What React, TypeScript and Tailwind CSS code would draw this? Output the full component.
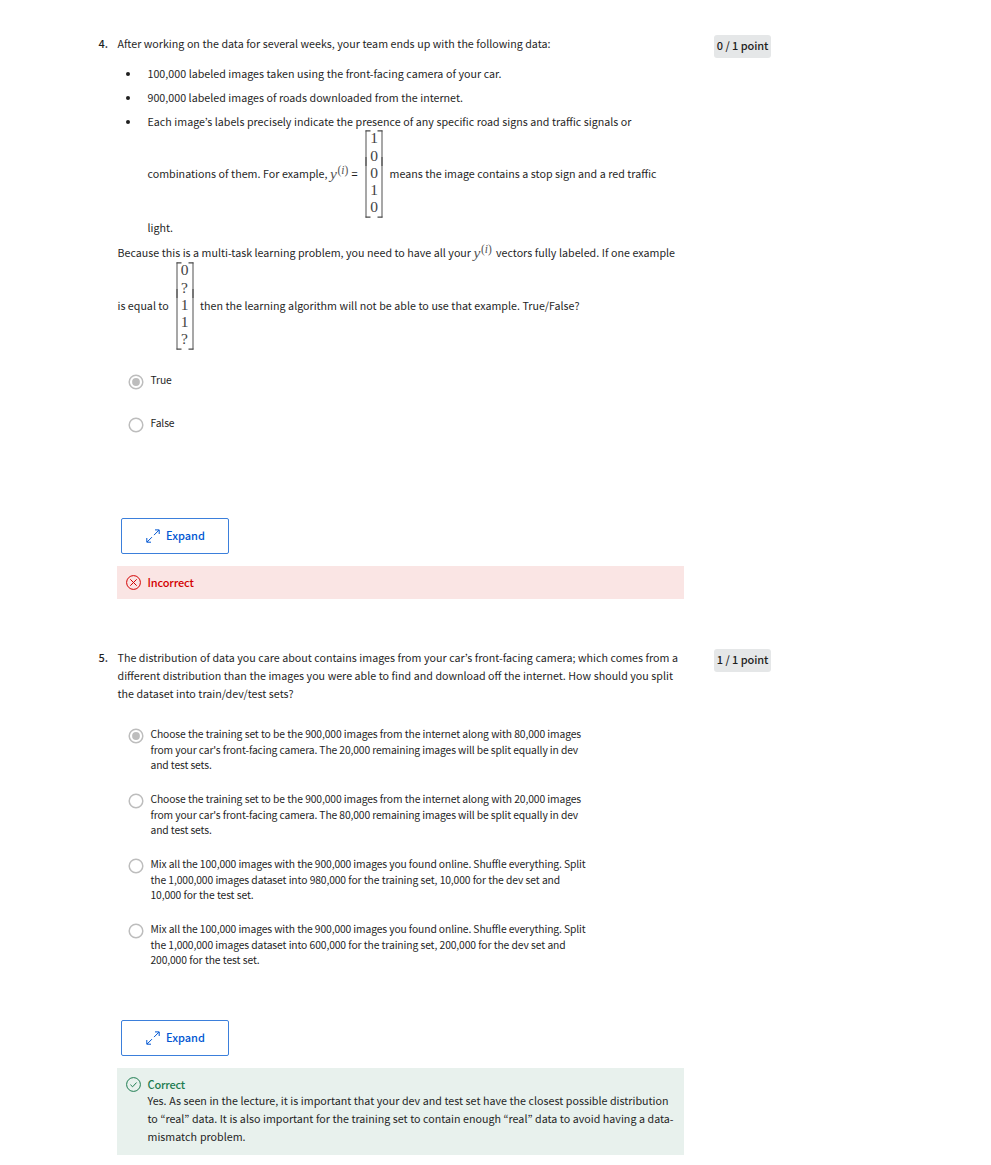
import type { ReactNode } from "react";

const base = "whitespace-nowrap [text-align-last:justify]";

function Line({ w, children }: { w: string; children: ReactNode }) {
  return <div className={`${base} ${w} h-[18px] shrink-0 text-[10.7px] leading-[18px]`}>{children}</div>;
}

function Bracket({ flip }: { flip?: boolean }) {
  return (
    <svg viewBox="0 0 6 88" className={flip ? "h-[88px] w-[6px] shrink-0 -scale-x-100" : "h-[88px] w-[6px] shrink-0"} fill="none">
      <path d="M1 .5V87.5" stroke="#8a8a8a" strokeWidth="1.5" />
      <path d="M.5 .8H5.5M.5 87.2H5.5" stroke="#4a4a4a" strokeWidth="1.2" />
      <path d="M1 27V36" stroke="#666" strokeWidth="1.5" />
    </svg>
  );
}

function Matrix({ rows }: { rows: string[] }) {
  return (
    <div className="-my-[36px] flex h-[90px] w-[18px] shrink-0 items-center">
      <Bracket />
      <div className="-mt-[3px] flex w-[6px] flex-col items-center font-['Liberation_Serif',serif] text-[15.5px] leading-[17.3px] text-[#444]">
        {rows.map((r, i) => (
          <span key={i}>{r}</span>
        ))}
      </div>
      <Bracket flip />
    </div>
  );
}

function Yi() {
  return (
    <span className="block h-[18px] w-[19px] shrink-0 whitespace-nowrap font-['Liberation_Serif',serif] text-[15.5px] leading-[18px] text-[#555]">
      <i>y</i>
      <span className="relative -top-[5px] ml-[0.5px] text-[11.5px] leading-none">
        (<i>i</i>)
      </span>
    </span>
  );
}

function Badge({ children }: { children: ReactNode }) {
  return (
    <div className="ml-[30px] mt-px flex h-[23px] w-[57px] shrink-0 items-center justify-center rounded-[3px] bg-[#e5e7e8] pb-[2px] text-[11px] font-medium tracking-[-0.1px] text-[#1f1f1f]">
      <div className={`${base} w-[51.5px]`}>{children}</div>
    </div>
  );
}

function Question({ n, score, children }: { n: string; score: string; children: ReactNode }) {
  return (
    <section className="flex items-start pl-[98px]">
      <div className="w-[19px] shrink-0 pl-[0.5px] text-[11px] font-medium leading-[18px]">{n}.</div>
      <div className="w-[567px] shrink-0 pt-px">{children}</div>
      <Badge>{score}</Badge>
    </section>
  );
}

function Bullet({ children }: { children: ReactNode }) {
  return (
    <li className="flex h-[24px] items-start pl-[9px]">
      <span className="mt-[7px] mr-[17.5px] size-[4px] rounded-full bg-[#1f1f1f]" />
      {children}
    </li>
  );
}

function Radio({ on }: { on?: boolean }) {
  return (
    <svg viewBox="0 0 16 16" className="mt-[2px] size-[16px] shrink-0" fill="none">
      <circle cx="8" cy="8" r="6.8" stroke="#bdbdbd" strokeWidth="1.5" />
      {on && <circle cx="8" cy="8" r="3.9" fill="#bdbdbd" />}
    </svg>
  );
}

function Option({ on, lines, className }: { on?: boolean; lines: [string, string][]; className: string }) {
  return (
    <label className={`flex items-start pl-[11px] ${className}`}>
      <Radio on={on} />
      <span className="ml-[6.5px] block text-[10.3px] leading-[15.7px]">
        {lines.map(([t, w]) => (
          <span key={t} className={`${base} ${w} block tracking-[-0.12px]`}>
            {t}
          </span>
        ))}
      </span>
    </label>
  );
}

function Expand() {
  return (
    <button className="ml-[4px] flex h-[36px] w-[108px] items-center rounded-[2px] border border-[#3b7fdb] pl-[24px] text-[11px] font-medium text-[#0056d2]">
      <svg viewBox="0 0 14 14" className="size-[14px]" fill="none" stroke="#0056d2" strokeWidth="1">
        <path d="M9 .9H13.2V5M13 1.1L8 6.1M6 8.1L1 13.1M.8 9V13.2H5" />
      </svg>
      <span className="ml-[6px] whitespace-nowrap pb-px">Expand</span>
    </button>
  );
}

function StatusIcon({ ok }: { ok?: boolean }) {
  return (
    <svg viewBox="0 0 15 15" className="size-[15px] shrink-0" fill="none" stroke="currentColor" strokeWidth="1">
      <circle cx="7.5" cy="7.5" r="6.9" />
      {ok ? <path d="M4.4 7.7L6.6 9.8L10.6 5.5" /> : <path d="M4.3 4.3L10.7 10.7M10.7 4.3L4.3 10.7" />}
    </svg>
  );
}

export default function App() {
  return (
    <main className="h-[1165px] w-[991px] overflow-hidden bg-white pt-[34px] font-['Noto_Sans_CJK_KR',sans-serif] text-[#1f1f1f]">
      <Question n="4" score="0 / 1 point">
        <Line w="w-[433px] ml-[0.5px]">After working on the data for several weeks, your team ends up with the following data:</Line>
        <ul className="mt-[12px]">
          <Bullet><Line w="w-[354px]">100,000 labeled images taken using the front-facing camera of your car.</Line></Bullet>
          <Bullet><Line w="w-[315.5px]">900,000 labeled images of roads downloaded from the internet.</Line></Bullet>
          <Bullet><Line w="w-[484px]">Each image’s labels precisely indicate the presence of any specific road signs and traffic signals or</Line></Bullet>
        </ul>
        <div className="mt-[28px] flex h-[18px] items-center pl-[30.5px]">
          <Line w="w-[180px]">combinations of them. For example,</Line>
          <div className="ml-[2.5px]"><Yi /></div>
          <Line w="w-[7px] ml-[2.5px] font-medium">=</Line>
          <div className="ml-[6.5px]"><Matrix rows={["1", "0", "0", "1", "0"]} /></div>
          <Line w="w-[267px] ml-[6.5px]">means the image contains a stop sign and a red traffic</Line>
        </div>
        <div className="mt-[36px] pl-[30.5px]"><Line w="w-[25.5px]">light.</Line></div>
        <div className="mt-[7px] flex items-center">
          <Line w="w-[353.5px] ml-[0.5px]">Because this is a multi-task learning problem, you need to have all your</Line>
          <div className="ml-[2.5px]"><Yi /></div>
          <Line w="w-[179px] ml-[3.5px]">vectors fully labeled. If one example</Line>
        </div>
        <div className="mt-[35px] flex h-[18px] items-center">
          <Line w="w-[51px] ml-[0.5px]">is equal to</Line>
          <div className="ml-[7px]"><Matrix rows={["0", "?", "1", "1", "?"]} /></div>
          <Line w="w-[379.5px] ml-[6.5px]">then the learning algorithm will not be able to use that example. True/False?</Line>
        </div>
        <Option on className="mt-[57px] h-[43px]" lines={[["True", "w-[21px]"]]} />
        <Option className="h-[43px]" lines={[["False", "w-[23px]"]]} />
        <div className="mt-[60px]"><Expand /></div>
        <div className="mt-[12px] flex h-[33px] items-center bg-[#fae5e4] pl-[9px] text-[11px] font-medium text-[#d30001]">
          <StatusIcon />
          <span className="ml-[6.5px] whitespace-nowrap tracking-[-0.15px]">Incorrect</span>
        </div>
      </Question>

      <div className="h-[49px]" />

      <Question n="5" score="1 / 1 point">
        <Line w="w-[560.5px] ml-[0.5px]">The distribution of data you care about contains images from your car’s front-facing camera; which comes from a</Line>
        <Line w="w-[555.5px] ml-[0.5px]">different distribution than the images you were able to find and download off the internet. How should you split</Line>
        <Line w="w-[176px] ml-[0.5px]">the dataset into train/dev/test sets?</Line>
        <Option on className="mt-[23px] h-[65px]" lines={[
          ["Choose the training set to be the 900,000 images from the internet along with 80,000 images", "w-[430.5px]"],
          ["from your car's front-facing camera. The 20,000 remaining images will be split equally in dev", "w-[427px]"],
          ["and test sets.", "w-[60.5px]"],
        ]} />
        <Option className="h-[65px]" lines={[
          ["Choose the training set to be the 900,000 images from the internet along with 20,000 images", "w-[430.5px]"],
          ["from your car's front-facing camera. The 80,000 remaining images will be split equally in dev", "w-[427px]"],
          ["and test sets.", "w-[60.5px]"],
        ]} />
        <Option className="h-[65px]" lines={[
          ["Mix all the 100,000 images with the 900,000 images you found online. Shuffle everything. Split", "w-[435px]"],
          ["the 1,000,000 images dataset into 980,000 for the training set, 10,000 for the dev set and", "w-[409.5px]"],
          ["10,000 for the test set.", "w-[103px]"],
        ]} />
        <Option className="h-[65px]" lines={[
          ["Mix all the 100,000 images with the 900,000 images you found online. Shuffle everything. Split", "w-[435px]"],
          ["the 1,000,000 images dataset into 600,000 for the training set, 200,000 for the dev set and", "w-[415px]"],
          ["200,000 for the test set.", "w-[109px]"],
        ]} />
        <div className="mt-[34px]"><Expand /></div>
        <div className="mt-[12px] flex h-[87px] items-start bg-[#e8f1ed] pl-[9px] pt-[8px]">
          <span className="mt-[0.5px] text-[#1d7c50]"><StatusIcon ok /></span>
          <div className="ml-[6.5px]">
            <div className="whitespace-nowrap text-[11px] font-medium leading-[16px] tracking-[-0.2px] text-[#1d7c50]">Correct</div>
            <Line w="w-[521px]">Yes. As seen in the lecture, it is important that your dev and test set have the closest possible distribution</Line>
            <Line w="w-[526px]">to “real” data. It is also important for the training set to contain enough “real” data to avoid having a data-</Line>
            <Line w="w-[98px]">mismatch problem.</Line>
          </div>
        </div>
      </Question>
    </main>
  );
}
